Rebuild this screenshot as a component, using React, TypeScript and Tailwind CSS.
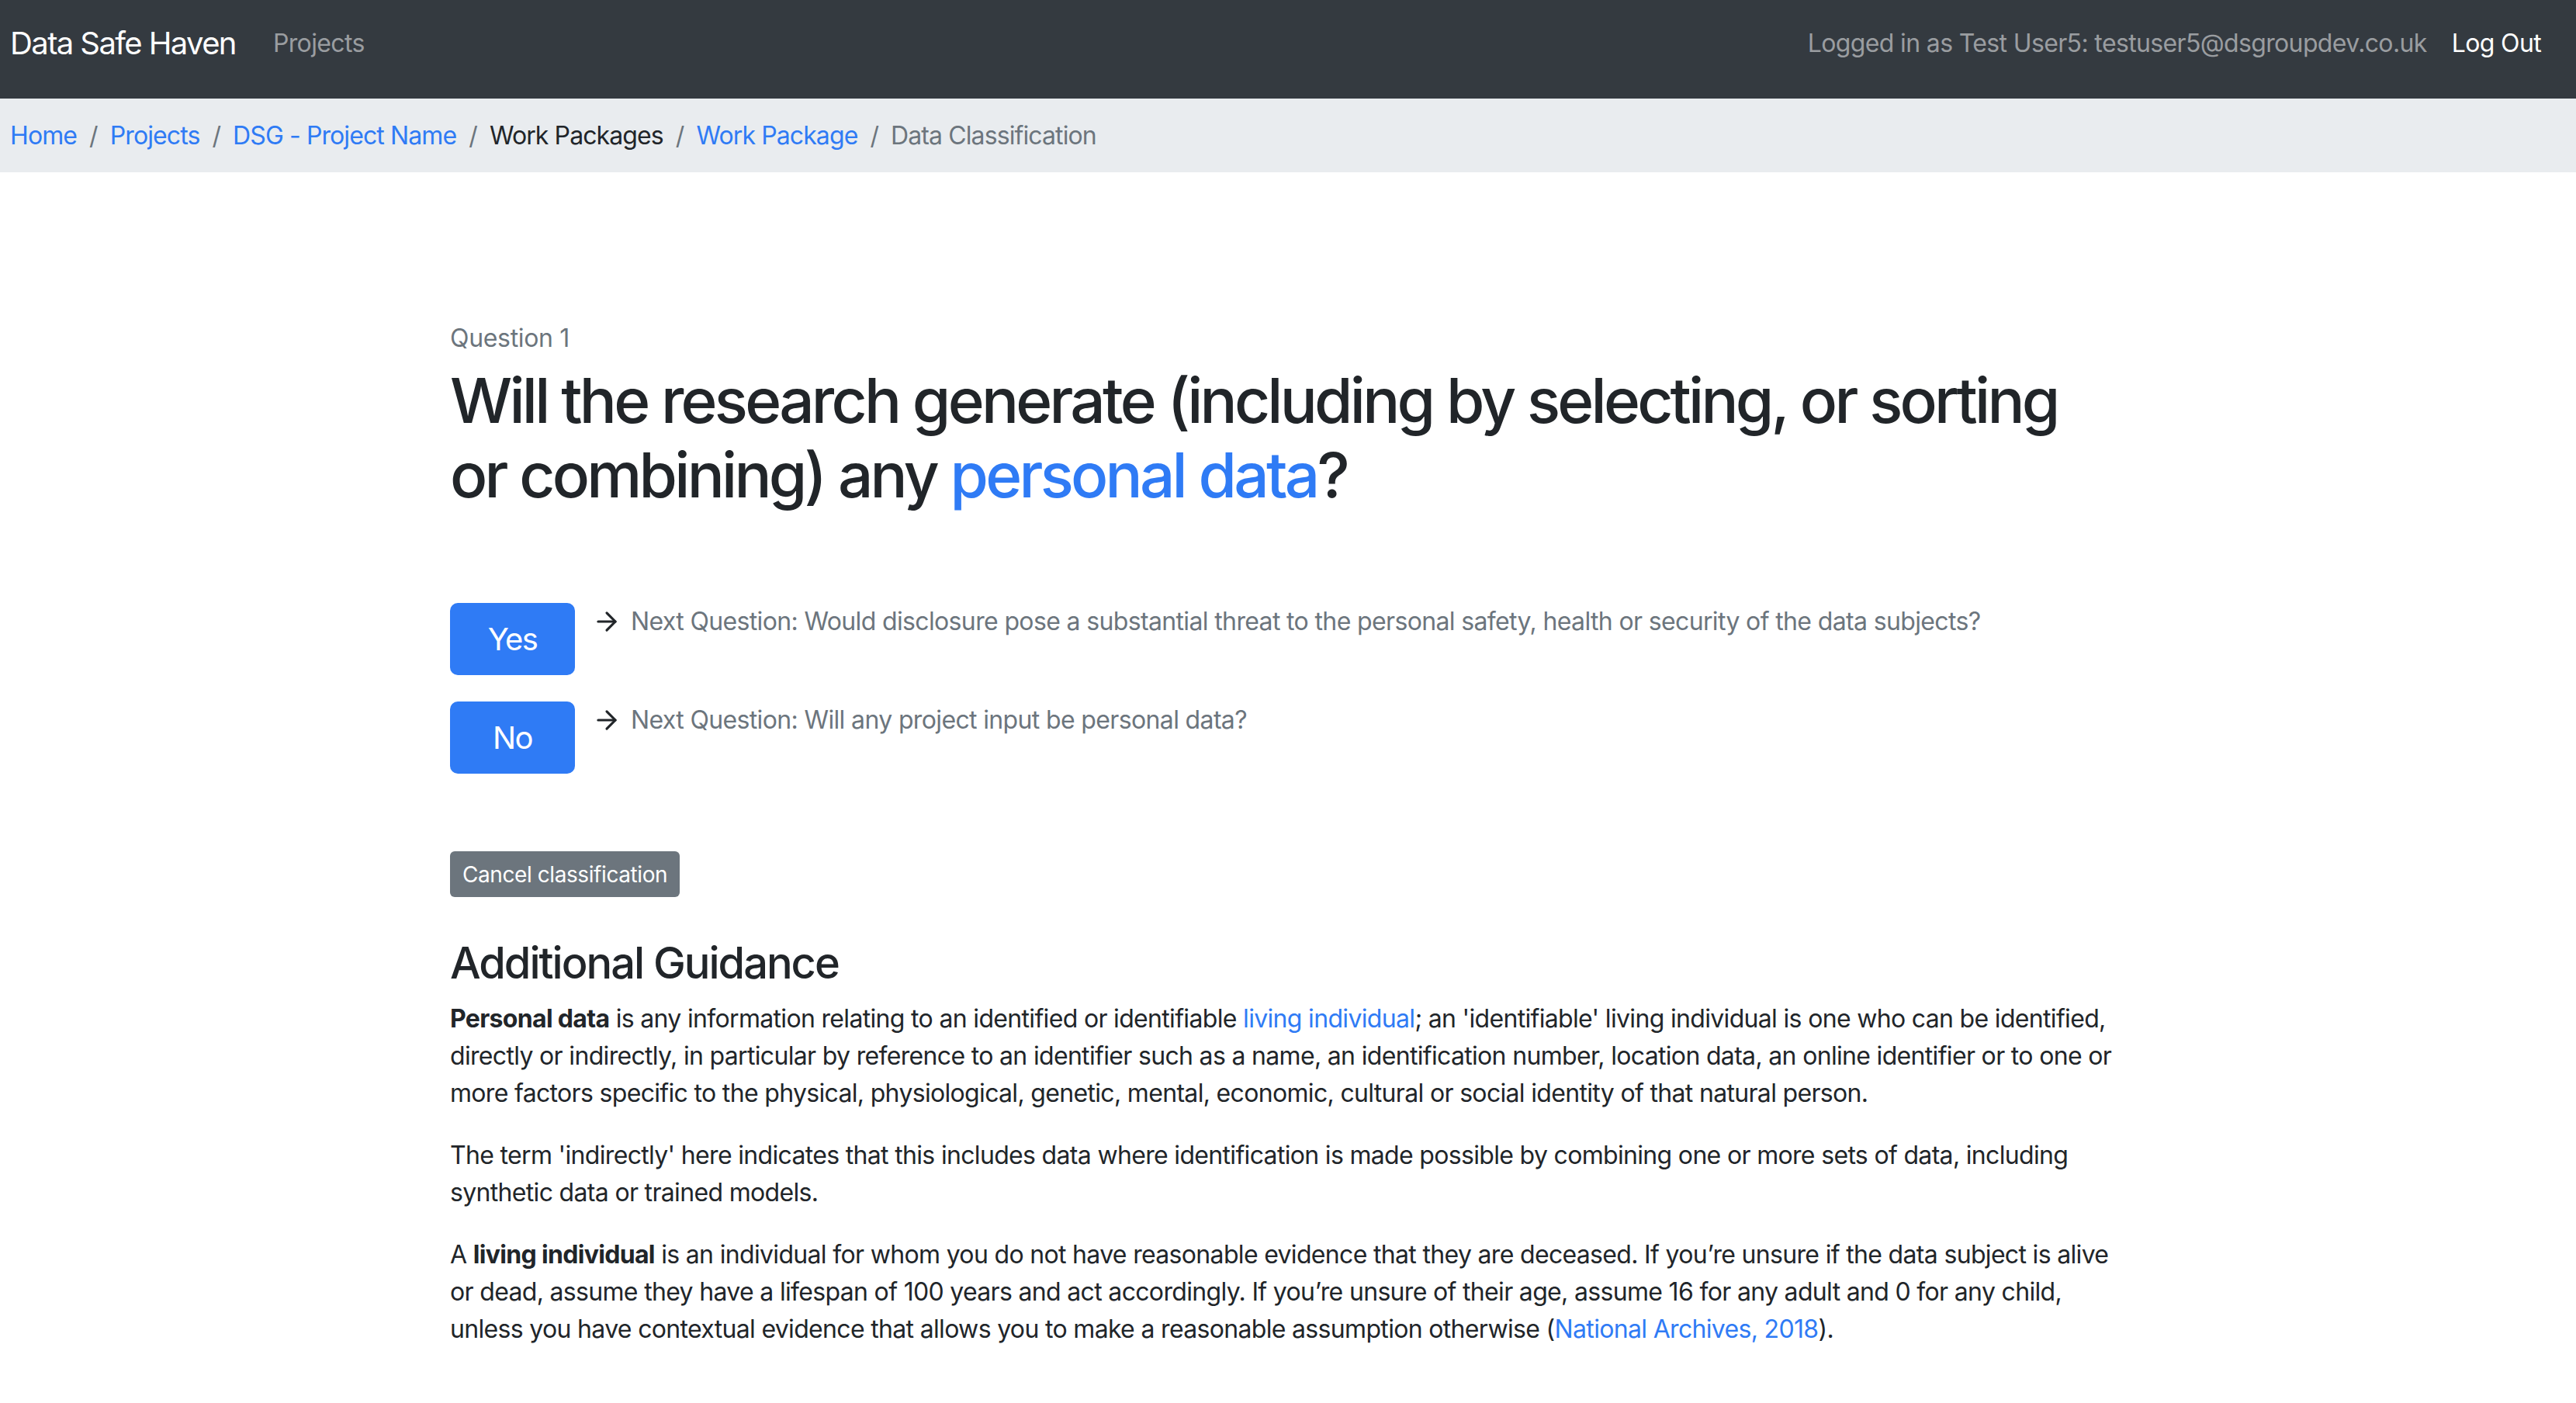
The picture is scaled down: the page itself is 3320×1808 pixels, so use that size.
import { ArrowRight } from "lucide-react";

const font = { fontFamily: '"Inter", "Liberation Sans", sans-serif' };

function Crumb({ label, href, last }: { label: string; href?: boolean; last?: boolean }) {
  return (
    <li className="flex items-center">
      <span className={href ? "text-[#2f7bf5]" : last ? "text-[#6c757d]" : "text-[#212529]"}>{label}</span>
      {!last && <span className="px-[16px] text-[#6c757d]">/</span>}
    </li>
  );
}

function AnswerRow({ label, next }: { label: string; next: string }) {
  return (
    <div className="flex items-start">
      <button className="w-[161px] h-[93px] rounded-[10px] bg-[#2f7bf5] text-white text-[40px] leading-none tracking-[-0.04em]">
        {label}
      </button>
      <div className="flex items-center ml-[22px] h-[48px] text-[32px] leading-[48px] tracking-[-0.02em]">
        <ArrowRight className="w-[38px] h-[38px] text-[#212529]" strokeWidth={2} />
        <span className="ml-[12px] text-[#6c757d]">Next Question: {next}</span>
      </div>
    </div>
  );
}

export default function App() {
  return (
    <div className="min-h-screen bg-white text-[#212529]" style={font}>
      {/* top bar */}
      <nav className="h-[127px] bg-[#343a40] flex items-center pl-[13px] pr-[29px] pb-[16px]">
        <span className="text-[40px] text-white tracking-[-0.04em]">Data Safe Haven</span>
        <a className="ml-[32px] px-[16px] text-[32px] text-[#9a9da0] tracking-[-0.02em]">Projects</a>
        <div className="ml-auto flex items-center text-[32px] tracking-[-0.02em]">
          <span className="px-[16px] text-[#9a9da0]">Logged in as Test User5: testuser5@dsgroupdev.co.uk</span>
          <a className="px-[16px] text-white">Log Out</a>
        </div>
      </nav>

      {/* breadcrumb */}
      <ol className="h-[95px] bg-[#e9ecef] flex items-center px-[13px] text-[32px] tracking-[-0.028em]">
        <Crumb label="Home" href />
        <Crumb label="Projects" href />
        <Crumb label="DSG - Project Name" href />
        <Crumb label="Work Packages" />
        <Crumb label="Work Package" href />
        <Crumb label="Data Classification" last />
      </ol>

      <main className="ml-[580px] w-[2146px] pt-[190px] pb-[80px]">
        <p className="text-[32px] leading-[48px] text-[#6c757d] tracking-[-0.01em]">Question 1</p>
        <h1 className="mt-[8px] text-[80px] leading-[96px] font-medium tracking-[-0.047em] text-[#212529]">
          Will the research generate (including by selecting, or sorting or combining) any{" "}
          <a className="text-[#2f7bf5]">personal data</a>?
        </h1>

        <div className="mt-[117px] flex flex-col gap-[34px]">
          <AnswerRow
            label="Yes"
            next="Would disclosure pose a substantial threat to the personal safety, health or security of the data subjects?"
          />
          <AnswerRow label="No" next="Will any project input be personal data?" />
        </div>

        <button className="mt-[100px] h-[59px] px-[16px] rounded-[6px] bg-[#6c757d] text-white text-[28px] tracking-[-0.015em]">
          Cancel classification
        </button>

        <h3 className="mt-[52px] text-[56px] leading-[67px] font-medium tracking-[-0.036em]">Additional Guidance</h3>

        <div className="mt-[14px] text-[32px] leading-[48px] tracking-[-0.021em] flex flex-col gap-[32px]">
          <p>
            <b className="font-bold">Personal data</b> is any information relating to an identified or identifiable{" "}
            <a className="text-[#2f7bf5]">living individual</a>; an 'identifiable' living individual is one who can be
            identified, directly or indirectly, in particular by reference to an identifier such as a name, an
            identification number, location data, an online identifier or to one or more factors specific to the
            physical, physiological, genetic, mental, economic, cultural or social identity of that natural person.
          </p>
          <p>
            The term 'indirectly' here indicates that this includes data where identification is made possible by
            combining one or more sets of data, including synthetic data or trained models.
          </p>
          <p>
            A <b className="font-bold">living individual</b> is an individual for whom you do not have reasonable
            evidence that they are deceased. If you’re unsure if the data subject is alive or dead, assume they have a
            lifespan of 100 years and act accordingly. If you’re unsure of their age, assume 16 for any adult and 0 for
            any child, unless you have contextual evidence that allows you to make a reasonable assumption otherwise (
            <a className="text-[#2f7bf5]">National Archives, 2018</a>).
          </p>
        </div>
      </main>
    </div>
  );
}
